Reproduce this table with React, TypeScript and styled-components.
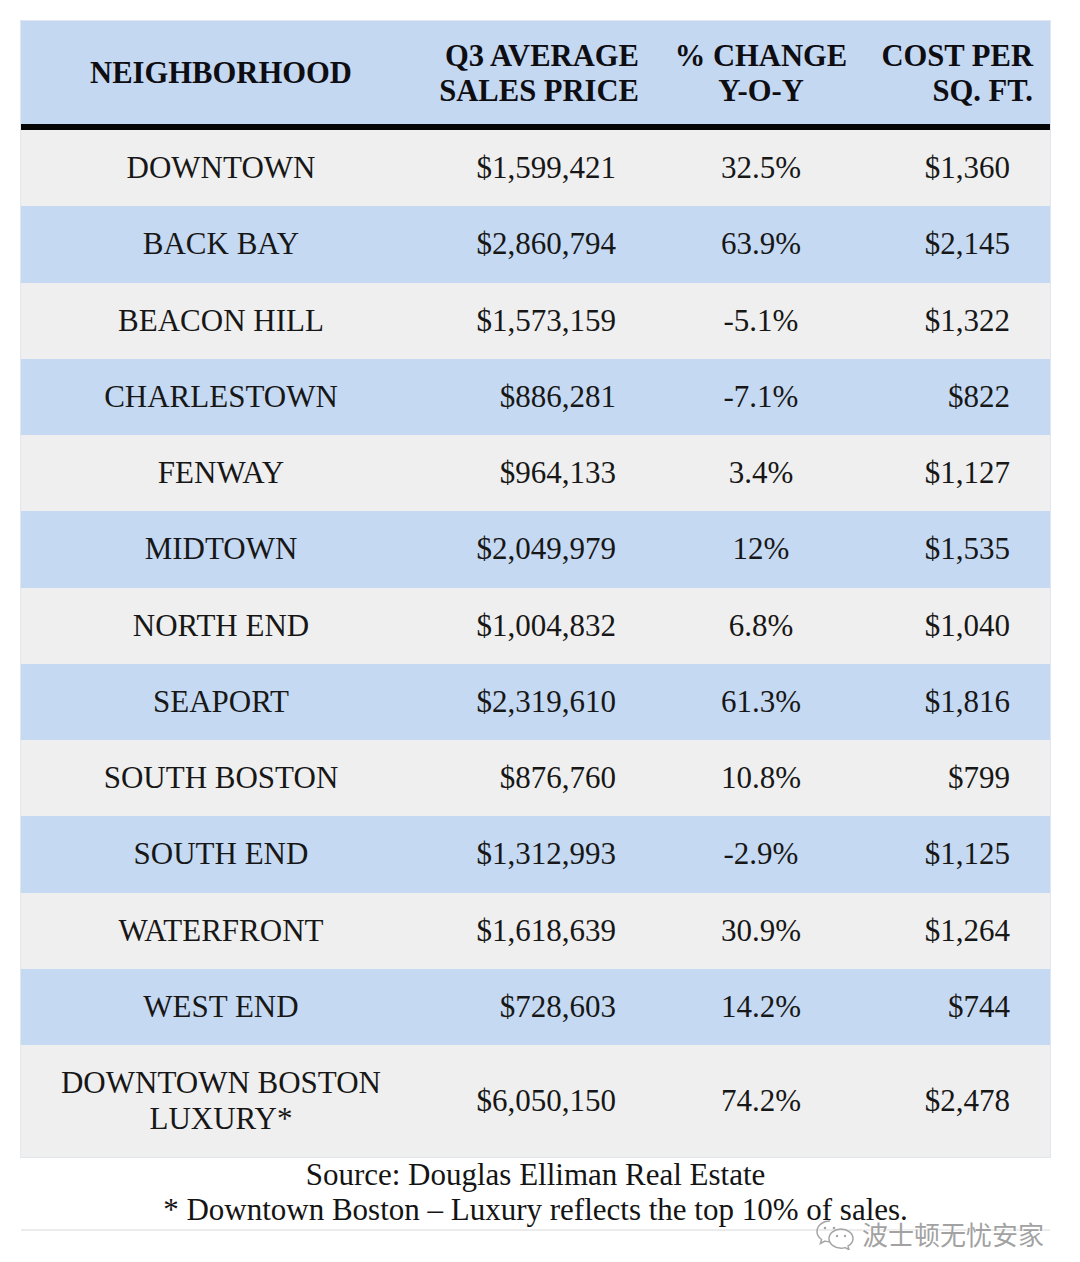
import React from "react";
import styled, { createGlobalStyle } from "styled-components";

const Global = createGlobalStyle`
  html, body { margin: 0; padding: 0; background: #ffffff; }
  body { font-family: "Liberation Serif", "Times New Roman", serif; color: #161616; }
`;

const Page = styled.div`
  width: 1080px;
  height: 1262px;
  box-sizing: border-box;
  padding: 21px 30px 0 21px;
  position: relative;
  overflow: hidden;
`;

const Table = styled.div`
  width: 1029px;
  display: grid;
  grid-template-columns: 400px 235px 210px 184px;
  box-shadow: 0 0 0 1px #e2e6ee;
`;

const HeadCell = styled.div<{ $align: "center" | "right" }>`
  height: 101px;
  padding-top: 2px;
  background: #c5d8f2;
  border-bottom: 6px solid #050505;
  display: flex;
  align-items: center;
  justify-content: ${(p) => (p.$align === "right" ? "flex-end" : "center")};
  text-align: ${(p) => p.$align};
  padding-right: ${(p) => (p.$align === "right" ? "17px" : "0")};
  font-weight: bold;
  font-size: 30.6px;
  line-height: 35px;
  color: #0e0e12;
`;

const Cell = styled.div<{ $align: "center" | "right"; $blue: boolean; $tall: boolean }>`
  height: ${(p) => (p.$tall ? "112px" : "76.25px")};
  background: ${(p) => (p.$blue ? "#c6d9f2" : "#efefef")};
  display: flex;
  align-items: center;
  justify-content: ${(p) => (p.$align === "right" ? "flex-end" : "center")};
  text-align: ${(p) => p.$align};
  padding-right: ${(p) => (p.$align === "right" ? "40px" : "0")};
  font-size: 31px;
  line-height: 36px;
  color: #171717;
`;

const Footer = styled.div`
  width: 1029px;
  text-align: center;
  font-size: 31px;
  line-height: 35px;
  color: #141414;
  border-bottom: 2px solid #ececec;
  padding-bottom: 2px;
`;

const Watermark = styled.div`
  position: absolute;
  left: 814px;
  top: 1218px;
  display: flex;
  align-items: center;
  gap: 6px;
  color: #a2a2a2;
  font-family: "Noto Sans CJK SC", sans-serif;
  font-size: 26px;
  line-height: 32px;
  text-shadow: 0 0 2px #fff, 0 0 2px #fff;
`;

type Row = [string, string, string, string];

const rows: Row[] = [
  ["DOWNTOWN", "$1,599,421", "32.5%", "$1,360"],
  ["BACK BAY", "$2,860,794", "63.9%", "$2,145"],
  ["BEACON HILL", "$1,573,159", "-5.1%", "$1,322"],
  ["CHARLESTOWN", "$886,281", "-7.1%", "$822"],
  ["FENWAY", "$964,133", "3.4%", "$1,127"],
  ["MIDTOWN", "$2,049,979", "12%", "$1,535"],
  ["NORTH END", "$1,004,832", "6.8%", "$1,040"],
  ["SEAPORT", "$2,319,610", "61.3%", "$1,816"],
  ["SOUTH BOSTON", "$876,760", "10.8%", "$799"],
  ["SOUTH END", "$1,312,993", "-2.9%", "$1,125"],
  ["WATERFRONT", "$1,618,639", "30.9%", "$1,264"],
  ["WEST END", "$728,603", "14.2%", "$744"],
];

const aligns: ("center" | "right")[] = ["center", "right", "center", "right"];

const WeChatIcon = () => (
  <svg width="42" height="32" viewBox="0 0 42 32" fill="none" stroke="#a5a5a5" strokeWidth="1.5">
    <path d="M16 3C8.5 3 3 7.8 3 13.5c0 3.3 1.8 6.1 4.6 8l-1.2 4 4.6-2.4c1.6.5 3.2.7 5 .7" />
    <path d="M27 11c-6.6 0-12 4.3-12 9.6s5.4 9.6 12 9.6c1.4 0 2.8-.2 4-.6l4 2-1-3.4c3-1.8 5-4.5 5-7.6C39 15.3 33.6 11 27 11z" />
    <circle cx="11" cy="10" r="1.3" fill="#a5a5a5" stroke="none" />
    <circle cx="20" cy="10" r="1.3" fill="#a5a5a5" stroke="none" />
    <circle cx="23" cy="18" r="1.2" fill="#a5a5a5" stroke="none" />
    <circle cx="31" cy="18" r="1.2" fill="#a5a5a5" stroke="none" />
  </svg>
);

export default function App() {
  return (
    <Page>
      <Global />
      <Table>
        <HeadCell $align="center">NEIGHBORHOOD</HeadCell>
        <HeadCell $align="right">
          Q3 AVERAGE
          <br />
          SALES PRICE
        </HeadCell>
        <HeadCell $align="center">
          % CHANGE
          <br />
          Y-O-Y
        </HeadCell>
        <HeadCell $align="right">
          COST PER
          <br />
          SQ. FT.
        </HeadCell>
        {rows.map((r, i) =>
          r.map((v, j) => (
            <Cell key={`${i}-${j}`} $align={aligns[j]} $blue={i % 2 === 1} $tall={false}>
              {v}
            </Cell>
          ))
        )}
        <Cell $align="center" $blue={false} $tall>
          DOWNTOWN BOSTON
          <br />
          LUXURY*
        </Cell>
        <Cell $align="right" $blue={false} $tall>
          $6,050,150
        </Cell>
        <Cell $align="center" $blue={false} $tall>
          74.2%
        </Cell>
        <Cell $align="right" $blue={false} $tall>
          $2,478
        </Cell>
      </Table>
      <Footer>
        Source: Douglas Elliman Real Estate
        <br />* Downtown Boston – Luxury reflects the top 10% of sales.
      </Footer>
      <Watermark>
        <WeChatIcon />
        <span>波士顿无忧安家</span>
      </Watermark>
    </Page>
  );
}
